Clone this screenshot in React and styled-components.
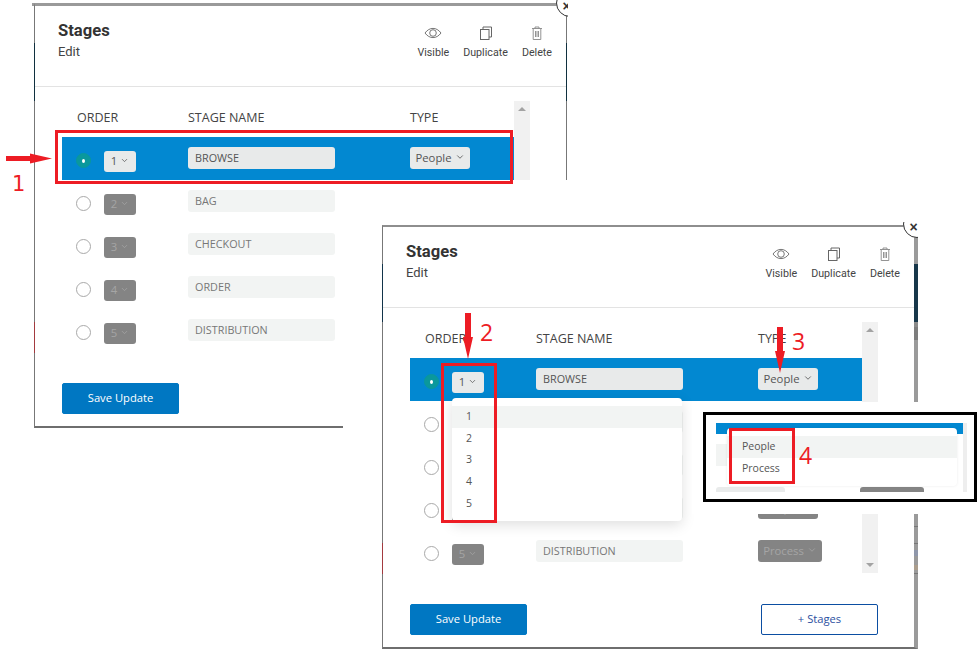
import React from "react";
import styled, { createGlobalStyle } from "styled-components";
import { ChevronDown } from "lucide-react";

const Global = createGlobalStyle`
  html, body { margin: 0; padding: 0; background: #fff; }
  #root { width: 978px; height: 652px; }
`;

const Canvas = styled.div`
  position: relative;
  width: 978px;
  height: 652px;
  overflow: hidden;
  background: #fff;
  font-family: "Open Sans", sans-serif;
`;

const Modal = styled.div`
  position: ${props => (props.$floating ? "absolute" : "relative")};
  left: ${props => (props.$floating ? "34px" : "auto")};
  top: ${props => (props.$floating ? "3px" : "auto")};
  width: ${props => (props.$wide ? 536 : 533)}px;
  height: ${props => (props.$wide ? 424 : 425)}px;
  box-sizing: border-box;
  background: #fff;
  border-top: ${props => (props.$wide ? "2px solid #8e8e8e" : "3px solid #9a9a9a")};
  border-left: 1px solid #777;
  border-right: ${props => (props.$wide ? "4px solid #9a9a9a" : "1px solid #777")};
  border-bottom: 2px solid #6e6e6e;
`;

const Tab = styled.div`
  position: absolute;
  left: -3px;
  top: -3px;
  width: 2px;
  height: 3px;
  background: #9a9a9a;
`;

const Sliver = styled.div`
  position: absolute;
  top: ${props => props.$top}px;
  height: ${props => props.$height}px;
  ${props => (props.$side === "left" ? "left: -1px; width: 1px;" : `right: -${props.$w}px; width: ${props.$w}px;`)}
  background: ${props => props.$color};
`;

const CloseClip = styled.div`
  position: absolute;
  right: ${props => (props.$wide ? -4 : -2)}px;
  top: ${props => (props.$wide ? -5 : -6)}px;
  width: ${props => (props.$wide ? 16 : 15)}px;
  height: ${props => (props.$wide ? 17 : 18)}px;
  overflow: hidden;
`;

const CloseCircle = styled.div`
  width: 28px;
  height: 28px;
  margin-left: ${props => (props.$wide ? 1 : 3)}px;
  margin-top: ${props => (props.$wide ? -12 : -11)}px;
  padding: 6px 7px 0 0;
  box-sizing: border-box;
  border: 1.5px solid #333;
  border-radius: 50%;
  background: #fff;
  color: #333;
  display: flex;
  align-items: center;
  justify-content: center;
  font: bold 14px/1 "Liberation Sans", sans-serif;
`;

const Header = styled.header`
  height: 81px;
  box-sizing: border-box;
  display: flex;
  justify-content: space-between;
  padding: 15px 14px 0 23px;
  border-bottom: 1px solid #e3e3e3;
`;

const Title = styled.h2`
  margin: 0;
  font: 700 16.6px/20px Roboto, sans-serif;
  color: #333;
`;

const Subtitle = styled.div`
  margin-top: 3px;
  font: 400 13px/16px Roboto, sans-serif;
  color: #444;
`;

const Actions = styled.div`
  display: flex;
  gap: 14px;
  padding-top: 5px;
`;

const Action = styled.div`
  display: flex;
  flex-direction: column;
  align-items: center;
  gap: 5px;
  font: 400 10.7px/15px Roboto, sans-serif;
  color: #444;
  svg { display: block; }
`;

const Body = styled.div`
  padding: 14px 0 0 27px;
  width: 468px;
`;

const List = styled.div`
  display: flex;
  height: 251px;
`;

const Rows = styled.div`
  width: 452px;
`;

const Track = styled.div`
  width: 16px;
  background: #f1f1f1;
  display: flex;
  flex-direction: column;
  justify-content: space-between;
  align-items: center;
  padding: 6px 0;
  box-sizing: border-box;
`;

const Arrow = styled.div`
  width: 0;
  height: 0;
  border-left: 4px solid transparent;
  border-right: 4px solid transparent;
  ${props => (props.$down ? "border-top: 4px solid #a3a3a3;" : "border-bottom: 4px solid #a3a3a3;")}
`;

const HeadRow = styled.div`
  height: 36px;
  box-sizing: border-box;
  display: grid;
  grid-template-columns: 111px 222px 1fr;
  padding: 9px 0 0 15px;
  font-size: 12.5px;
  line-height: 16px;
  color: #444;
`;

const Row = styled.div`
  position: relative;
  height: 43px;
  display: grid;
  grid-template-columns: 42px 84px 222px 1fr;
  align-items: center;
  background: ${props => (props.$active ? "#0288d1" : "transparent")};
`;

const Radio = styled.div`
  width: 15px;
  height: 15px;
  margin: 4px 0 0 14px;
  box-sizing: border-box;
  border-radius: 50%;
  border: 1px solid ${props => (props.$on ? "#0a989c" : "#a9a9a9")};
  background: ${props => (props.$on ? "#0a989c" : "#fff")};
  display: flex;
  align-items: center;
  justify-content: center;
  &::after {
    content: "";
    display: ${props => (props.$on ? "block" : "none")};
    width: 3px;
    height: 4px;
    border-radius: 50%;
    background: #fff;
  }
`;

const Select = styled.div`
  justify-self: start;
  width: ${props => props.$width}px;
  height: ${props => props.$height}px;
  box-sizing: border-box;
  margin-top: ${props => props.$offset}px;
  padding-bottom: 2px;
  display: flex;
  align-items: center;
  justify-content: center;
  gap: 3px;
  border-radius: 3px;
  font-size: 11.3px;
  background: ${props => (props.$enabled ? "#e8eaea" : "#848484")};
  color: ${props => (props.$enabled ? "#555" : "#a5a5a5")};
`;

const NameField = styled.div`
  width: 147px;
  height: 22px;
  margin-bottom: 1px;
  box-sizing: border-box;
  padding-left: 7px;
  border-radius: 3px;
  font-size: 10.8px;
  line-height: 21px;
  background: ${props => (props.$active ? "#e8eaea" : "#f2f4f3")};
  color: ${props => (props.$active ? "#555" : "#777")};
`;

const Menu = styled.div`
  position: absolute;
  left: 42px;
  top: 40px;
  z-index: 3;
  width: 230px;
  height: 123px;
  box-sizing: border-box;
  padding-top: 8px;
  border-radius: 4px;
  background: #fff;
  box-shadow: 0 4px 14px rgba(0, 0, 0, 0.13);
`;

const MenuItem = styled.div`
  height: 21.7px;
  padding-left: ${props => props.$inset}px;
  font-size: 10.5px;
  line-height: 21px;
  color: #555;
  background: ${props => (props.$current ? "#f2f4f3" : "transparent")};
`;

const Footer = styled.footer`
  display: flex;
  justify-content: space-between;
  margin-top: 31px;
`;

const Button = styled.button`
  width: 117px;
  height: 31px;
  padding: 0 0 2px;
  border-radius: 2px;
  border: 1px solid ${props => (props.$outline ? "#0b4ea2" : "#0077c2")};
  background: ${props => (props.$outline ? "#fff" : "#0077c2")};
  color: ${props => (props.$outline ? "#2b4fa0" : "#fff")};
  font: 400 11.2px "Open Sans", sans-serif;
`;

const Cover = styled.div`
  position: absolute;
  isolation: isolate;
  left: 343px;
  top: 180px;
  right: 0;
  bottom: 0;
  padding: 45px 0 0 39px;
  background: #fff;
`;

const CalloutMask = styled.div`
  position: absolute;
  left: 692px;
  top: 402px;
  width: 286px;
  height: 112px;
  box-sizing: border-box;
  padding: 10px 0 0 11px;
  background: #fff;
`;

const Callout = styled.div`
  width: 274px;
  height: 90px;
  box-sizing: border-box;
  border: 3px solid #000;
  padding: 8px 0 0 10px;
  background: #fff;
`;

const Crop = styled.div`
  position: relative;
  width: 251px;
  height: 69px;
  overflow: hidden;
`;

const CropStrip = styled.div`
  height: 11px;
  width: 247px;
  background: #0288d1;
`;

const CropTrack = styled.div`
  position: absolute;
  right: 0;
  top: 0;
  bottom: 0;
  width: 4px;
  background: #eeeeee;
`;

const CropField = styled.div`
  position: absolute;
  left: 0;
  top: 21px;
  width: 11px;
  height: 22px;
  background: #f2f4f3;
`;

const CropMenu = styled.div`
  position: relative;
  width: 230px;
  height: 58px;
  margin: -6px 0 0 11px;
  box-sizing: border-box;
  padding-top: 8px;
  border-radius: 4px;
  background: #fff;
  box-shadow: 0 0 3px rgba(0, 0, 0, 0.08);
`;

const CropBottom = styled.div`
  display: flex;
  gap: 75px;
  margin-top: 1px;
  height: 5px;
  width: 247px;
`;

const CropPiece = styled.div`
  width: ${props => props.$width}px;
  height: 5px;
  border-radius: 3px 3px 0 0;
  background: ${props => props.$color};
`;

const RedBox = styled.div`
  position: absolute;
  left: ${props => props.$x}px;
  top: ${props => props.$y}px;
  width: ${props => props.$w}px;
  height: ${props => props.$h}px;
  box-sizing: border-box;
  border: 3px solid #ed1c24;
  pointer-events: none;
`;

const Note = styled.div`
  position: absolute;
  left: ${props => props.$x}px;
  top: ${props => props.$y}px;
  font: 400 ${props => (props.$footed ? "21px" : "23px")}/26px ${props => (props.$footed ? '"DejaVu Sans"' : '"Open Sans"')}, sans-serif;
  color: #ed1c24;
`;

const ArrowMark = styled.svg`
  position: absolute;
  left: ${props => props.$x}px;
  top: ${props => props.$y}px;
`;

const EyeIcon = () => (
  <svg width="18" height="14" viewBox="0 0 18 14" fill="none" stroke="#666" strokeWidth="0.9">
    <path d="M1 7c2.200-3 5-4.600 8-4.600S14.800 4 17 7c-2.200 3-5 4.600-8 4.600S3.200 10 1 7z" />
    <circle cx="9" cy="7" r="3.300" />
  </svg>
);

const CopyIcon = () => (
  <svg width="14" height="14" viewBox="0 0 14 14" fill="none" stroke="#666" strokeWidth="1">
    <rect x="1.500" y="3.500" width="8.500" height="10" />
    <path d="M4 3.500V1h8.500v10H10" />
  </svg>
);

const TrashIcon = () => (
  <svg width="14" height="14" viewBox="0 0 14 14" fill="none" stroke="#888" strokeWidth="0.9">
    <path d="M2 2.500h10M5 2.500V1h4v1.500M3.200 2.500v11h7.600v-11M5.500 5v6M7 5v6M8.500 5v6" />
  </svg>
);

const stages = [
  { order: 1, name: "BROWSE", type: "People" },
  { order: 2, name: "BAG", type: "Process" },
  { order: 3, name: "CHECKOUT", type: "Process" },
  { order: 4, name: "ORDER", type: "People" },
  { order: 5, name: "DISTRIBUTION", type: "Process" },
];

const StagesModal = ({ wide, floating, showMenu, slivers }) => (
  <Modal $wide={wide} $floating={floating}>
    {floating && <Tab />}
    {slivers.map(s => (
      <Sliver key={s.side + s.top} $side={s.side} $top={s.top} $height={s.height} $color={s.color} $w={wide ? 4 : 1} />
    ))}
    <CloseClip $wide={wide}>
      <CloseCircle $wide={wide}>×</CloseCircle>
    </CloseClip>
    <Header>
      <div>
        <Title>Stages</Title>
        <Subtitle>Edit</Subtitle>
      </div>
      <Actions>
        <Action><EyeIcon />Visible</Action>
        <Action><CopyIcon />Duplicate</Action>
        <Action><TrashIcon />Delete</Action>
      </Actions>
    </Header>
    <Body>
      <List>
        <Rows>
          <HeadRow>
            <span>ORDER</span>
            <span>STAGE NAME</span>
            <span>TYPE</span>
          </HeadRow>
          {stages.map((s, i) => (
            <Row key={s.order} $active={i === 0}>
              <Radio $on={i === 0} />
              <Select $width={32} $height={21} $offset={6} $enabled={i === 0}>
                {s.order}
                <ChevronDown size={9} strokeWidth={2} />
              </Select>
              <NameField $active={i === 0}>{s.name}</NameField>
              <Select $width={s.type === "People" ? 60 : 64} $height={22} $offset={-1} $enabled={i === 0}>
                {s.type}
                <ChevronDown size={10} strokeWidth={2} />
              </Select>
              {showMenu && i === 0 && (
                <Menu>
                  {stages.map(m => (
                    <MenuItem key={m.order} $inset={14} $current={m.order === 1}>{m.order}</MenuItem>
                  ))}
                </Menu>
              )}
            </Row>
          ))}
        </Rows>
        <Track>
          <Arrow />
          <Arrow $down />
        </Track>
      </List>
      <Footer>
        <Button>Save Update</Button>
        <Button $outline>+ Stages</Button>
      </Footer>
    </Body>
  </Modal>
);

const leftSlivers = [
  { side: "left", top: 37, height: 58, color: "#10303f" },
  { side: "left", top: 316, height: 31, color: "#a33a3f" },
  { side: "right", top: 37, height: 58, color: "#10303f" },
];

const rightSlivers = [
  { side: "left", top: 37, height: 58, color: "#12344a" },
  { side: "left", top: 316, height: 31, color: "#a33a3f" },
  { side: "right", top: 37, height: 58, color: "#17374a" },
  { side: "right", top: 95, height: 5, color: "#8a8a8a" },
  { side: "right", top: 100, height: 13, color: "#7d7d7d" },
  { side: "right", top: 299, height: 1, color: "#777" },
  { side: "right", top: 316, height: 1, color: "#777" },
  { side: "right", top: 323, height: 6, color: "#8f97aa" },
  { side: "right", top: 338, height: 5, color: "#ab9d8c" },
  { side: "right", top: 346, height: 1, color: "#777" },
];

const App = () => (
  <Canvas>
    <Global />
    <StagesModal floating slivers={leftSlivers} />
    <Cover>
      <StagesModal wide showMenu slivers={rightSlivers} />
    </Cover>
    <CalloutMask>
      <Callout>
        <Crop>
          <CropStrip />
          <CropField />
          <CropTrack />
          <CropMenu>
            <MenuItem $inset={15} $current>People</MenuItem>
            <MenuItem $inset={15}>Process</MenuItem>
          </CropMenu>
          <CropBottom>
            <CropPiece $width={69} $color="#e9ebeb" />
            <CropPiece $width={64} $color="#848484" />
          </CropBottom>
        </Crop>
      </Callout>
    </CalloutMask>

    <RedBox $x={55} $y={130} $w={458} $h={54} />
    <RedBox $x={441} $y={363} $w={56} $h={160} />
    <RedBox $x={729} $y={428} $w={66} $h={56} />

    <ArrowMark $x={6} $y={153} width="46" height="11" viewBox="0 0 46 11">
      <path d="M0 3h24V.500L46 5.500 24 10.500V8H0z" fill="#ed1c24" />
    </ArrowMark>
    <ArrowMark $x={463} $y={313} width="10" height="46" viewBox="0 0 10 46">
      <path d="M2 0h6v24h2L5 46 0 24h2z" fill="#ed1c24" />
    </ArrowMark>
    <ArrowMark $x={775} $y={327} width="10" height="46" viewBox="0 0 10 46">
      <path d="M2 0h6v24h2L5 46 0 24h2z" fill="#ed1c24" />
    </ArrowMark>

    <Note $x={12} $y={171} $footed>1</Note>
    <Note $x={480} $y={319}>2</Note>
    <Note $x={792} $y={328}>3</Note>
    <Note $x={799} $y={442}>4</Note>
  </Canvas>
);

export default App;
